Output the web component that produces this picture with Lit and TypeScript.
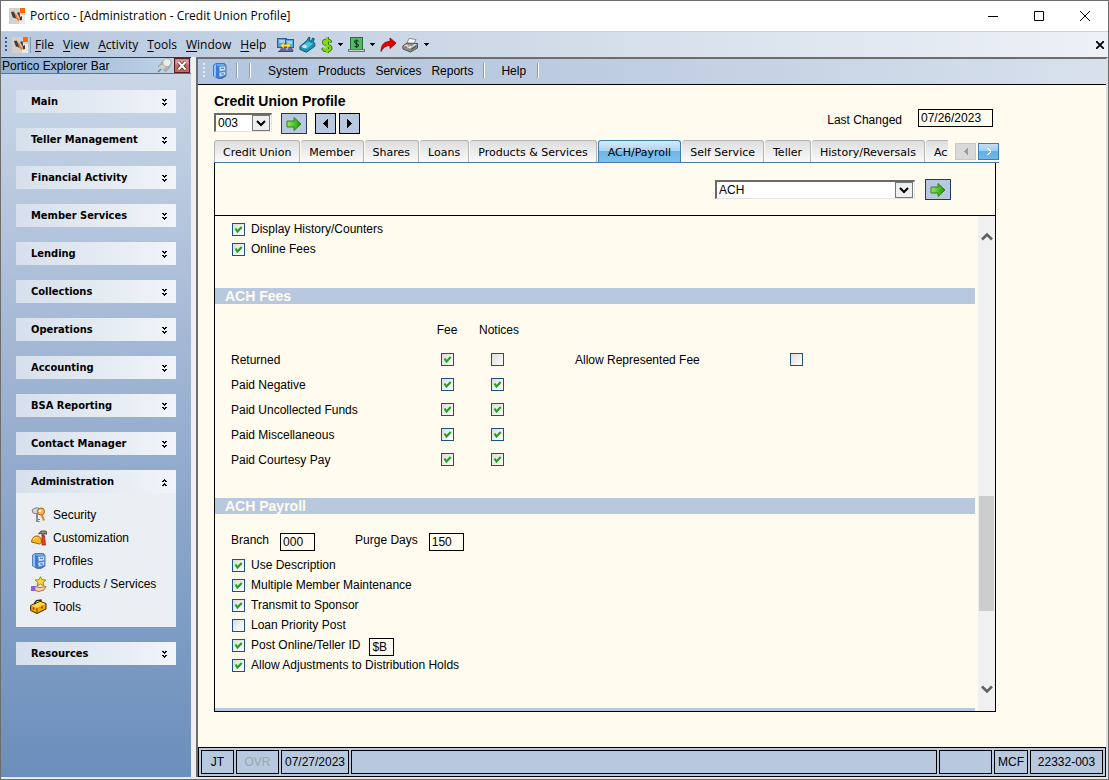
import { LitElement, html, css, svg } from "lit";
import { customElement, property } from "lit/decorators.js";

const px = (rows: string[], pal: Record<string, string>) => {
  const h = rows.length;
  const w = Math.max(...rows.map((r) => r.length));
  return html`<svg width=${w} height=${h} viewBox="0 0 ${w} ${h}" shape-rendering="crispEdges" aria-hidden="true">
    ${rows.flatMap((r, y) =>
      [...r].map((c, x) => (pal[c] ? svg`<rect x=${x} y=${y} width="1" height="1" fill=${pal[c]}></rect>` : null))
    )}
  </svg>`;
};

const logo = html`<svg width="16" height="16" viewBox="0 0 16 16" aria-hidden="true">
  <rect width="16" height="16" fill="#d3d0ce" /><path d="M10 7h6v9h-6z" fill="#ebe9e8" />
  <path d="M2 4l2.500-.5L8 9 7.500 11 5 9.500 4 10z" fill="#3f3b3b" />
  <path d="M5 4l3 3.500 1 2.500 2 1-1.500 2.500L7 10z" fill="#f47b20" />
  <path d="M8 5l2.500-1 .5 5 2-1v4l-2 .5-.5-3z" fill="#3f3b3b" />
  <rect x="11" width="5" height="5" fill="#ff6a00" /></svg>`;
const screens = html`<svg width="17" height="16" viewBox="0 0 17 16" aria-hidden="true">
  <rect x=".5" y="1.500" width="9" height="9" fill="#5b9be6" stroke="#3a55a0" />
  <rect x="8.500" y="2.500" width="8" height="8" fill="#4fb0ea" stroke="#3a55a0" />
  <path d="M2 3h6v3H2zM10 4h5v3h-5z" fill="#a4d4fa" />
  <path d="M2 14l2-3h5l1 3zM10 14l1-3h4l2 3z" fill="#6565a8" /><path d="M1 14h15v1H1z" fill="#44447c" />
  <path d="M3 8.500l4-3v2h3v-2l4 3-4 3v-2H7v2z" fill="#ffe22e" stroke="#bd8b00" stroke-width=".6" /></svg>`;
const tag = html`<svg width="17" height="16" viewBox="0 0 17 16" aria-hidden="true">
  <path d="M.8 9.500L8 3.500l1.500-3 1.500 0-.5 3 2 .8L13.500 1l1.800.8-1 3 1.500 1.500v3L7.500 15.300 1 12.500z" fill="#1993b0" stroke="#0a4f68" stroke-width=".9" />
  <path d="M2 9.500L9 4.500l5 2.200L7.500 12z" fill="#46c4dc" /><ellipse cx="5.500" cy="9.500" rx="2.300" ry="1.700" fill="#ecd6f0" /></svg>`;
const dollar = html`<svg width="12" height="16" viewBox="0 0 12 16" aria-hidden="true">
  <g fill="none" stroke-linecap="round"><path d="M9.500 4.500C8 2 2.500 2.500 2.500 5.500S10 8 10 11s-6 4-8 1M6.500 1v14" stroke="#2c6a08" stroke-width="3" />
  <path d="M9 4.500C8 2.500 2.800 3 2.800 5.500S9.500 8 9.500 11s-5.500 3.500-7 1M6 1v14" stroke="#86d616" stroke-width="2.200" /></g></svg>`;
const cash = html`<svg width="17" height="16" viewBox="0 0 17 16" aria-hidden="true">
  <rect x="2.500" y=".5" width="12" height="12" fill="#54b867" stroke="#26713a" />
  <path d="M10.500 4.500C9.500 3 6.500 3.300 6.500 5s4 1.300 4 3.300-3 2-4 .7M8.500 2.500v8.500" fill="none" stroke="#083d14" stroke-width="1.100" />
  <path d="M0 12h17v3H0z" fill="#777" /><path d="M1 13h15v1H1z" fill="#c4c4c4" /></svg>`;
const redArrow = html`<svg width="17" height="16" viewBox="0 0 17 16" aria-hidden="true">
  <path d="M1 14.500C1 8 4 4.500 10 4.500V1l6 5-6 5.500V8.500C6 8.500 3 10.500 1 14.500z" fill="#e60000" stroke="#8e0000" stroke-width=".8" /></svg>`;
const printer = html`<svg width="17" height="16" viewBox="0 0 17 16" aria-hidden="true">
  <path d="M7 1.500l7 1-3 6H4z" fill="#fff" stroke="#777" stroke-width=".8" />
  <path d="M.8 9L5 6l10.500.5v4.500l-7 4-7.500-3z" fill="#8f8f8f" stroke="#444" stroke-width=".9" />
  <path d="M1.500 9l6.500 2.500 7-4.500h-3L10 9.500 5 7.500z" fill="#e6e6e6" /><path d="M3 10h2" stroke="#e22" /><path d="M5.500 9h2" stroke="#2b2" />
  <path d="M9 12.500l5.500-3.500" stroke="#444" /></svg>`;
const cabinet = html`<svg width="14" height="16" viewBox="0 0 14 16" aria-hidden="true">
  <path d="M.6 2L3 .6h8.500L13 2.500V13l-4 2.400H5L.6 13z" fill="#3a7bd8" stroke="#3564a8" stroke-width=".8" />
  <path d="M1 2.200L3 1v13.500L1 13z" fill="#8cc4fb" /><path d="M3 1h8l1 2H6L4 2.500z" fill="#69a8f2" />
  <path d="M6 3.500l6.500-.5v4.500L6.500 8.500zM6 9.500l6.500-1V12l-6 2z" fill="#cfe3f8" stroke="#5d84b8" stroke-width=".6" />
  <path d="M8 5.300h3M8 11h3" stroke="#3565a5" /></svg>`;
const keys = html`<svg width="16" height="16" viewBox="0 0 16 16" aria-hidden="true">
  <path d="M1 3l3-2h4v4L5.500 7 2 6z" fill="#d5d5d5" stroke="#777" stroke-width=".9" /><path d="M6 6v9" stroke="#8a8a8a" stroke-width="2" /><path d="M7 12.500h2M7 14.500h1.500" stroke="#777" />
  <circle cx="10" cy="4.500" r="3.500" fill="#f7b54c" stroke="#a96518" /><circle cx="9" cy="4" r="1.300" fill="#fff" />
  <path d="M10.500 7.500l2.500 6M13 10.500l-2 1" stroke="#d98a26" stroke-width="2" /></svg>`;
const hat = html`<svg width="16" height="16" viewBox="0 0 16 16" aria-hidden="true">
  <path d="M.5 12C1 8 3 6 6 6s4.500 2.500 4.500 6.500l-2 1.500z" fill="#ffb81c" stroke="#a05a00" /><path d="M2.500 10C3 8 4 7.500 6 7.500" fill="none" stroke="#ffe79a" />
  <path d="M7.500 4L10 1h5l1 3h-2l-1-1v3h-2V3z" fill="#9a9a9a" stroke="#333" stroke-width=".8" />
  <path d="M11 6h2.500l1 9h-3.500z" fill="#e8461c" stroke="#951f05" stroke-width=".7" /></svg>`;
const star = html`<svg width="16" height="16" viewBox="0 0 16 16" aria-hidden="true">
  <path d="M9.500 .7l1.500 3 4 .3-3 2.500 1 3.500-3.500-2L6 10l1-3.500L4 4l4-.3z" fill="#ffd93a" stroke="#a37a08" stroke-width=".9" />
  <path d="M4 10.500l5 1 6-1-2 3.500-5 1.500-4-1z" fill="#fbd3a4" stroke="#a56b36" stroke-width=".9" /><path d="M0 10h4v5H0z" fill="#8a63dc" /></svg>`;
const box = html`<svg width="17" height="16" viewBox="0 0 17 16" aria-hidden="true">
  <path d="M.7 6.500L10 2.500l6 2V10L7 14.500.7 11.500z" fill="#f5a800" stroke="#3d2500" /><path d="M1.500 6.500L10.500 3l4.500 1.700L7 8.800z" fill="#ffd94e" />
  <path d="M7 9v5" stroke="#7b4a00" /><path d="M4 5l2.500-3.500L11 1v2" fill="none" stroke="#3d2500" stroke-width="1.300" /><path d="M3.500 8.500v2M12 7.500v2" stroke="#5a3600" stroke-width="1.500" /></svg>`;
const greenArrow = html`<svg width="16" height="16" viewBox="0 0 16 16" aria-hidden="true">
  <defs><linearGradient id="g" x2="1"><stop offset="0" stop-color="#9be85e" /><stop offset="1" stop-color="#139a08" /></linearGradient></defs>
  <path d="M1 5h7V1.500l7 6.500-7 6.500V11H1z" fill="url(#g)" stroke="#27751a" stroke-width=".9" /></svg>`;
const pin = html`<svg width="15" height="15" viewBox="0 0 15 15" aria-hidden="true">
  <path d="M1 14l4-4" stroke="#777" stroke-width="1.300" /><path d="M1 8c3 0 4-6 8-7s5 2 5 4-3 8-6 8.500C8 11 4 10 1 8z" fill="#b4b4b4" stroke="#8c8c8c" stroke-width=".7" />
  <circle cx="10" cy="4.500" r="3.600" fill="#ececec" /><ellipse cx="5" cy="9" rx="3" ry="2" fill="#d0d0d0" /></svg>`;
const cross = html`<svg width="16" height="15" viewBox="0 0 16 15" aria-hidden="true">
  <rect x=".5" y=".5" width="15" height="14" fill="#bf6a66" stroke="#5a1d1d" /><rect x="1.500" y="1.500" width="13" height="5" fill="#d59a96" />
  <path d="M4.500 4l7 7.500M11.500 4l-7 7.500" stroke="#5a1d1d" stroke-width="3.600" /><path d="M4.500 4l7 7.500M11.500 4l-7 7.500" stroke="#fff" stroke-width="2.200" /></svg>`;
const chevrons = px(["##.##", ".###.", "..#..", "", "##.##", ".###.", "..#.."], { "#": "#000" });
const chevronsUp = px(["..#..", ".###.", "##.##", "", "..#..", ".###.", "##.##"], { "#": "#000" });
const caret = px(["#####", ".###.", "..#.."], { "#": "#000" });
const left = px(["....#", "...##", "..###", ".####", "#####", ".####", "..###", "...##", "....#"], { "#": "#000" });
const right = px(["#....", "##...", "###..", "####.", "#####", "####.", "###..", "##...", "#...."], { "#": "#000" });
const greyLeft = px(["...#", "..##", ".###", "####", ".###", "..##", "...#"], { "#": "#9b9b9b" });
const whiteRight = px(["##..", ".##.", "..##", "...#", "..##", ".##.", "##.."], { "#": "#fff" });
const scrollMark = (d: string) => html`<svg width="12" height="9" viewBox="0 0 12 9" aria-hidden="true"><path d=${d} fill="none" stroke="#606060" stroke-width="2.600" /></svg>`;

const reset = css`
  * { box-sizing: border-box; }
  svg { display: block; flex: none; }
  button, input, select { font: inherit; color: inherit; margin: 0; }
  button { padding: 0; border: 0; background: none; display: flex; align-items: center; justify-content: center; white-space: nowrap; }
`;

@customElement("explorer-bar")
class ExplorerBar extends LitElement {
  static styles = [reset, css`
    :host { display: flex; flex-direction: column; width: 190px; flex: none; font: 12px/16px "Liberation Sans", Arial, sans-serif; }
    .title { display: flex; align-items: center; height: 17px; padding: 0 1px; border-bottom: 1px solid #53779f; border-top: 1px solid #2c3c50; background: linear-gradient(90deg, #8fb0d2, #c4d6e8); gap: 2px; }
    .title span { flex: 1; }
    .groups { flex: 1; display: flex; flex-direction: column; gap: 15px; padding: 16px 15px; background: linear-gradient(#c9d6e7, #93abcd 55%, #6b8fbb); }
    .head { display: flex; justify-content: space-between; width: 100%; height: 23px; padding: 1px 9px 0 15px; font: bold 11px/16px "DejaVu Sans Condensed", "DejaVu Sans", sans-serif; font-stretch: condensed; background: linear-gradient(90deg, #d6e0ec, #f1f4f9); }
    ul { margin: 0; padding: 10px 0 9px 14px; list-style: none; background: #eaeff4; }
    a { display: flex; align-items: center; gap: 6px; height: 23px; color: #000; text-decoration: none; }
    .icon { width: 17px; display: flex; justify-content: center; }
  `];
  render() {
    const groups = ["Main", "Teller Management", "Financial Activity", "Member Services", "Lending", "Collections", "Operations", "Accounting", "BSA Reporting", "Contact Manager", "Administration", "Resources"];
    const items: [string, unknown][] = [["Security", keys], ["Customization", hat], ["Profiles", cabinet], ["Products / Services", star], ["Tools", box]];
    return html`
      <div class="title"><span>Portico Explorer Bar</span><button aria-label="Pin">${pin}</button><button aria-label="Close">${cross}</button></div>
      <nav class="groups">
        ${groups.map((g) => html`<section>
          <button class="head">${g}${g === "Administration" ? chevronsUp : chevrons}</button>
          ${g === "Administration" ? html`<ul>${items.map(([t, i]) => html`<li><a href="#"><span class="icon">${i}</span>${t}</a></li>`)}</ul>` : null}
        </section>`)}
      </nav>`;
  }
}

@customElement("tick-box")
class TickBox extends LitElement {
  @property({ type: Boolean }) on = false;
  @property() text = "";
  @property() name = "";
  static styles = [reset, css`
    :host { display: block; }
    label { display: flex; align-items: center; gap: 6px; }
    input { appearance: none; width: 13px; height: 13px; flex: none; border: 1px solid #1c5180; background: linear-gradient(135deg, #dcdcd7, #fff); }
    input:checked { background: url("data:image/svg+xml,%3Csvg xmlns='http://www.w3.org/2000/svg' viewBox='0 0 11 11'%3E%3Cpath d='M2.500 4.500L4.500 7.500L8.700 3' fill='none' stroke='%2321a121' stroke-width='2.100'/%3E%3C/svg%3E"), linear-gradient(135deg, #dcdcd7, #fff); }
  `];
  render() {
    return html`<label><input type="checkbox" .checked=${this.on} aria-label=${this.text || this.name}>${this.text ? html`<span>${this.text}</span>` : null}</label>`;
  }
}

@customElement("profile-page")
class ProfilePage extends LitElement {
  static styles = [reset, css`
    :host { flex: 1; min-height: 0; display: flex; flex-direction: column; padding: 8px 110px 35px 16px; background: #fffbef; font: 12px/16px "Liberation Sans", Arial, sans-serif; }
    h1 { margin: 0; font-size: 14px; line-height: 16px; }
    .top { display: flex; justify-content: space-between; align-items: flex-start; height: 31px; padding-right: 3px; flex: none; }
    .pick { display: flex; align-items: flex-start; padding-top: 4px; }
    .changed { display: flex; align-items: flex-start; gap: 16px; }
    .changed span { padding-top: 3px; }
    .box { border: 1px solid #000; background: #fffbef; height: 18px; padding: 0 2px; border-radius: 0; }
    .date { width: 75px; }
    .short { width: 35px; margin-top: 1px; }
    .id { width: 25px; margin-top: 1px; }
    .drop { position: relative; display: flex; border: 1px solid #e3e3e3; border-top: 2px solid #696969; border-left: 2px solid #696969; height: 19px; background: #fff; }
    .drop select { appearance: none; width: 100%; border: 0; border-radius: 0; background: none; padding: 0 20px 0 2px; }
    .drop svg { position: absolute; right: 1px; top: 0; pointer-events: none; }
    .branch { width: 58px; }
    .kind { width: 200px; }
    .go { width: 26px; height: 21px; border: 1px solid #1f3c60; background: #b8c9df; }
    .step { width: 21px; height: 21px; border: 1px solid #000; background: #b8c9df; }
    .pick .go { margin: 0 8px 0 9px; }
    .pick .step { margin-right: 3px; }
    .strip { display: flex; align-items: flex-end; height: 23px; margin-right: -3px; border-bottom: 1px solid #4a7eae; flex: none; }
    .tabs { flex: 1; min-width: 0; display: flex; gap: 1px; overflow: hidden; align-items: flex-end; height: 22px; margin-right: 5px; }
    .tab { flex: none; height: 22px; padding: 3px 8px 0; font: 11px/16px "DejaVu Sans", Verdana, sans-serif; border: 1px solid #b5b5b5; border-bottom: 0; border-left-width: 0; border-radius: 3px 3px 0 0; background: linear-gradient(#dedede, #fafafa); }
    .tab:first-child { border-left-width: 1px; }
    .tab.active { padding: 3px 9px 0; background: linear-gradient(#d5eafa, #a9d3f3 50%, #70b6ea 50%, #7fc0ee); border-color: #3b7db4; border-left-width: 1px; }
    .move { width: 21px; height: 17px; margin: 0 0 2px 2px; border: 1px solid #c9c9c9; background: #d9d9d9; }
    .move.live { border-color: #3b7db4; background: linear-gradient(#c2e0f7, #9accf0 50%, #62b0e8 50%, #6cb8ec); }
    .panel { flex: 1; min-height: 0; display: flex; flex-direction: column; border: 1px solid #000; border-top: 0; }
    .filter { display: flex; justify-content: flex-end; align-items: center; gap: 10px; height: 53px; padding: 1px 44px 0 0; border-bottom: 1px solid #000; flex: none; }
    .body { flex: 1; min-height: 0; display: flex; }
    .view { flex: 1; min-width: 0; overflow: hidden; padding-top: 5px; }
    .bar { width: 17px; flex: none; display: flex; flex-direction: column; align-items: center; background: #f0f0f0; padding: 16px 0 17px; }
    .thumb { width: 15px; height: 115px; background: #cdcdcd; margin: 255px 0 auto; }
    .list { padding: 0 17px; }
    .list tick-box { height: 20px; }
    .band { margin: 0 3px 0 0; height: 16px; padding-left: 10px; font: bold 14px/16px "Liberation Sans", Arial, sans-serif; color: #fffbef; background: #b8c9df; }
    .first { margin-top: 27px; }
    .next { margin-top: 31px; }
    table { border-collapse: collapse; table-layout: fixed; width: 590px; margin: 15px 0 26px 16px; }
    th { font-weight: normal; height: 22px; padding: 0; text-align: center; }
    td { height: 25px; padding: 0; }
    thead th { height: 28px; vertical-align: top; padding-top: 3px; }
    thead th:nth-child(3) { padding-left: 4px; }
    tbody th { text-align: left; }
    td tick-box { display: flex; justify-content: center; }
    .rep { padding-left: 53px; }
    .c1 { width: 191px; } .c2 { width: 50px; } .c3 { width: 50px; } .c4 { width: 249px; }
    .pay { display: flex; align-items: flex-start; gap: 11px; padding: 18px 0 6px 16px; }
    .pay .gap { margin-left: 29px; }
    .inline { display: flex; gap: 9px; height: 20px; }
  `];
  render() {
    const tabs = ["Credit Union", "Member", "Shares", "Loans", "Products & Services", "ACH/Payroll", "Self Service", "Teller", "History/Reversals", "Ac"];
    const fees: [string, boolean][] = [["Returned", false], ["Paid Negative", true], ["Paid Uncollected Funds", true], ["Paid Miscellaneous", true], ["Paid Courtesy Pay", true]];
    const dd = html`<svg width="18" height="16" viewBox="0 0 18 16"><rect x=".5" y=".5" width="17" height="15" fill="#efefef" stroke="#777" /><path d="M5 6l4 4 4-4" fill="none" stroke="#000" stroke-width="2" /></svg>`;
    return html`
      <h1>Credit Union Profile</h1>
      <div class="top">
        <div class="pick">
          <div class="drop branch"><select aria-label="Credit union number"><option>003</option></select>${dd}</div>
          <button class="go" aria-label="Go">${greenArrow}</button>
          <button class="step" aria-label="Previous">${left}</button>
          <button class="step" aria-label="Next">${right}</button>
        </div>
        <label class="changed"><span>Last Changed</span><input class="box date" value="07/26/2023"></label>
      </div>
      <div class="strip">
        <div class="tabs" role="tablist">${tabs.map((t) => html`<button role="tab" class="tab ${t === "ACH/Payroll" ? "active" : ""}">${t}</button>`)}</div>
        <button class="move" aria-label="Tabs left">${greyLeft}</button><button class="move live" aria-label="Tabs right">${whiteRight}</button>
      </div>
      <div class="panel">
        <div class="filter">
          <div class="drop kind"><select aria-label="Section"><option>ACH</option></select>${dd}</div>
          <button class="go" aria-label="Go">${greenArrow}</button>
        </div>
        <div class="body">
          <div class="view">
            <div class="list"><tick-box on text="Display History/Counters"></tick-box><tick-box on text="Online Fees"></tick-box></div>
            <h2 class="band first">ACH Fees</h2>
            <table>
              <colgroup><col class="c1"><col class="c2"><col class="c3"><col class="c4"><col></colgroup>
              <thead><tr><th></th><th>Fee</th><th>Notices</th><th></th><th></th></tr></thead>
              <tbody>${fees.map(([t, n], i) => html`<tr><th scope="row">${t}</th>
                <td><tick-box on name="${t} fee"></tick-box></td><td><tick-box ?on=${n} name="${t} notices"></tick-box></td>
                <td class="rep">${i === 0 ? "Allow Represented Fee" : ""}</td><td>${i === 0 ? html`<tick-box name="Allow Represented Fee"></tick-box>` : null}</td></tr>`)}</tbody>
            </table>
            <h2 class="band">ACH Payroll</h2>
            <div class="pay"><label for="br">Branch</label><input id="br" class="box short" value="000"><label class="gap" for="pd">Purge Days</label><input id="pd" class="box short" value="150"></div>
            <div class="list">
              <tick-box on text="Use Description"></tick-box><tick-box on text="Multiple Member Maintenance"></tick-box>
              <tick-box on text="Transmit to Sponsor"></tick-box><tick-box text="Loan Priority Post"></tick-box>
              <div class="inline"><tick-box on text="Post Online/Teller ID"></tick-box><input class="box id" aria-label="Teller ID" value="$B"></div>
              <tick-box on text="Allow Adjustments to Distribution Holds"></tick-box>
            </div>
            <div class="band next"></div>
          </div>
          <div class="bar">${scrollMark("M1 7.500L6 2.500L11 7.500")}<div class="thumb"></div>${scrollMark("M1 1.500L6 6.500L11 1.500")}</div>
        </div>
      </div>`;
  }
}

@customElement("app-root")
class AppRoot extends LitElement {
  static styles = [reset, css`
    :host { display: flex; flex-direction: column; height: 100vh; border: 1px solid #6d6d6d; box-sizing: border-box; overflow: hidden; background: #f0f0f0; font: 12px/16px "Open Sans", "Noto Sans", sans-serif; color: #000; }
    .titlebar { display: flex; align-items: center; height: 30px; padding-left: 8px; background: #fff; flex: none; }
    .titlebar span { flex: 1; padding-left: 5px; }
    .win { width: 46px; height: 28px; }
    .menu { display: flex; align-items: center; height: 26px; border-top: 1px solid #bcd4ea; background: linear-gradient(90deg, #b7c8df, #cfdae8 45%, #edf1f7); flex: none; padding: 0 4px; }
    .menu .item { margin-right: 9px; }
    .menu u { text-underline-offset: 2px; }
    .grip { width: 2px; height: 15px; margin: 0 5px 0 0; background: repeating-linear-gradient(#3c5c8c 0 2px, transparent 2px 4px); flex: none; }
    .logo { padding-right: 2px; margin-right: 4px; border-right: 1px solid #7f97b8; }
    .tools { display: flex; align-items: center; gap: 5px; flex: 1; margin-left: 2px; }
    .work { flex: 1; min-height: 0; display: flex; gap: 5px; }
    .main { flex: 1; min-width: 0; display: flex; flex-direction: column; border-left: 2px solid #6d6d6d; border-top: 2px solid #6d6d6d; border-right: 2px solid #dedede; }
    .sub { display: flex; align-items: center; height: 26px; padding: 0 0 2px 5px; border-bottom: 1px solid #000; background: linear-gradient(90deg, #b4c6df, #bccbe0 40%, #d8e1ec); font-family: "Liberation Sans", Arial, sans-serif; flex: none; }
    .sub .grip { background: repeating-linear-gradient(#e8eef6 0 2px, transparent 2px 4px); margin-right: 8px; }
    .sep { width: 2px; height: 15px; border-left: 1px solid #8f9cb0; background: #fff; flex: none; }
    .sub .item { margin-right: 10px; }
    .status { display: flex; gap: 2px; padding: 2px; height: 30px; border: 1px solid #000; background: #b8c9df; font-family: "Liberation Sans", Arial, sans-serif; flex: none; }
    .cell { border: 1px solid #000; display: flex; align-items: center; justify-content: center; flex: none; }
    .w1 { width: 33px; } .w2 { width: 43px; color: #a0a5ab; } .w3 { width: 68px; } .w4 { flex: 1; } .w5 { width: 53px; } .w6 { width: 34px; } .w7 { width: 73px; }
    .s1 { margin: 0 11px 0 9px; } .s2 { margin-right: 17px; } .s3 { margin-right: 16px; } .s4 { margin-left: 1px; }
    .foot { height: 2px; background: #e8e8e8; flex: none; }
  `];
  render() {
    return html`
      <header class="titlebar">${logo}<span>Portico - [Administration - Credit Union Profile]</span>
        <button class="win" aria-label="Minimize"><svg width="10" height="10"><path d="M0 5.500h10" stroke="#000" /></svg></button>
        <button class="win" aria-label="Maximize"><svg width="10" height="10"><path d="M.5 .5h9v9h-9z" fill="none" stroke="#000" /></svg></button>
        <button class="win" aria-label="Close"><svg width="10" height="10"><path d="M0 0l10 10M10 0L0 10" stroke="#000" /></svg></button>
      </header>
      <div class="menu"><div class="grip"></div><div class="logo">${logo}</div>
        ${["File", "View", "Activity", "Tools", "Window", "Help"].map((m) => html`<button class="item"><span><u>${m[0]}</u>${m.slice(1)}</span></button>`)}
        <div class="tools">
          <button aria-label="Connect">${screens}</button><button aria-label="Tag">${tag}</button>
          <button aria-label="Money">${dollar}</button><button aria-label="Money options">${caret}</button>
          <button aria-label="Cash">${cash}</button><button aria-label="Cash options">${caret}</button>
          <button aria-label="Forward">${redArrow}</button><button aria-label="Print">${printer}</button><button aria-label="Print options">${caret}</button>
        </div>
        <button aria-label="Close page"><svg width="8" height="8"><path d="M0 0l8 8M8 0L0 8" stroke="#000" stroke-width="1.800" /></svg></button>
      </div>
      <div class="work">
        <explorer-bar></explorer-bar>
        <div class="main">
          <div class="sub"><div class="grip"></div><button aria-label="Profiles">${cabinet}</button><div class="sep s1"></div><div class="sep s2"></div>
            ${["System", "Products", "Services", "Reports"].map((m) => html`<button class="item">${m}</button>`)}
            <div class="sep s3"></div><button class="item">Help</button><div class="sep s4"></div></div>
          <profile-page></profile-page>
          <footer class="status"><div class="cell w1">JT</div><div class="cell w2">OVR</div><div class="cell w3">07/27/2023</div><div class="cell w4"></div><div class="cell w5"></div><div class="cell w6">MCF</div><div class="cell w7">22332-003</div></footer>
        </div>
      </div>
      <div class="foot"></div>`;
  }
}
